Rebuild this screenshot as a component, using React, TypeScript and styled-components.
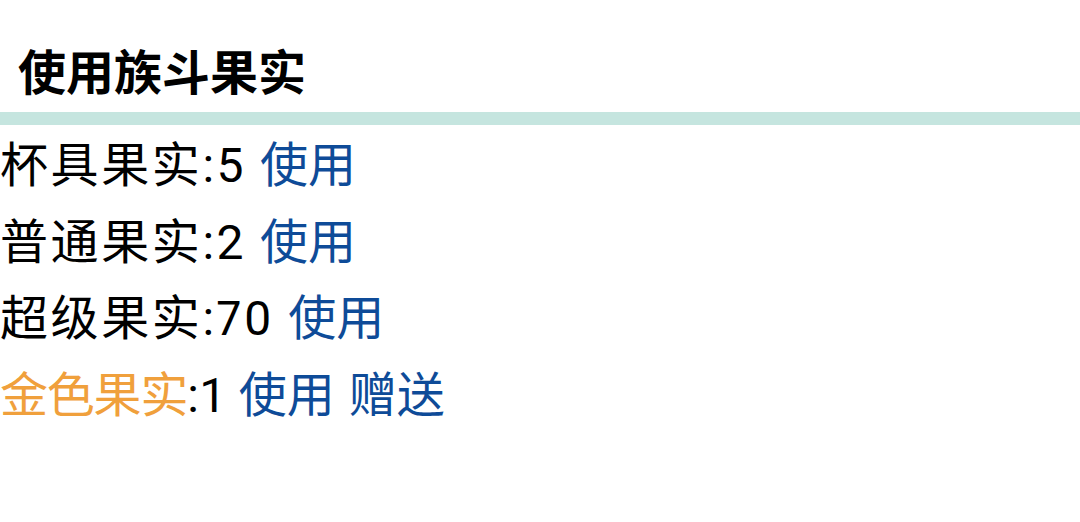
import React from "react";
import styled, { createGlobalStyle } from "styled-components";

const Global = createGlobalStyle`
  html, body { margin: 0; padding: 0; background: #ffffff; }
  body { font-family: Roboto, "Noto Sans CJK SC", sans-serif; }
`;

const Page = styled.div`
  width: 1080px;
  height: 522px;
  background: #fff;
  display: flex;
  flex-direction: column;
`;

const Header = styled.div`
  padding: 36px 18px 0;
  height: 76px;
  line-height: 76px;
  font-size: 48px;
  font-weight: 700;
  color: #000;
  font-family: Roboto, "Noto Sans CJK SC", sans-serif;
`;

const Divider = styled.div`
  height: 13px;
  background: #c5e5df;
`;

const List = styled.div`
  padding-top: 3px;
  display: flex;
  flex-direction: column;
`;

const Row = styled.div`
  font-size: 48px;
  line-height: 76.7px;
  color: #000;
  white-space: nowrap;
`;

const Name = styled.span<{ $gold?: boolean }>`
  color: ${(p) => (p.$gold ? "#f0a03c" : "#000")};
  letter-spacing: ${(p) => (p.$gold ? "-1.2px" : "2.6px")};
`;

const Count = styled.span`
  letter-spacing: 2.5px;
  font-variant-numeric: proportional-nums;
  font-feature-settings: "pnum" 1;
`;

const Action = styled.a`
  color: #0e4b98;
  text-decoration: none;
  margin-left: 14px;
`;

type Fruit = { name: string; count: number; gold?: boolean; gift?: boolean };

const fruits: Fruit[] = [
  { name: "杯具果实", count: 5 },
  { name: "普通果实", count: 2 },
  { name: "超级果实", count: 70 },
  { name: "金色果实", count: 1, gold: true, gift: true },
];

export default function App() {
  return (
    <Page>
      <Global />
      <Header>使用族斗果实</Header>
      <Divider />
      <List>
        {fruits.map((f) => (
          <Row key={f.name}>
            <Name $gold={f.gold}>{f.name}</Name>
            <Count>:{f.count}</Count>
            <Action>使用</Action>
            {f.gift && <Action>赠送</Action>}
          </Row>
        ))}
      </List>
    </Page>
  );
}
